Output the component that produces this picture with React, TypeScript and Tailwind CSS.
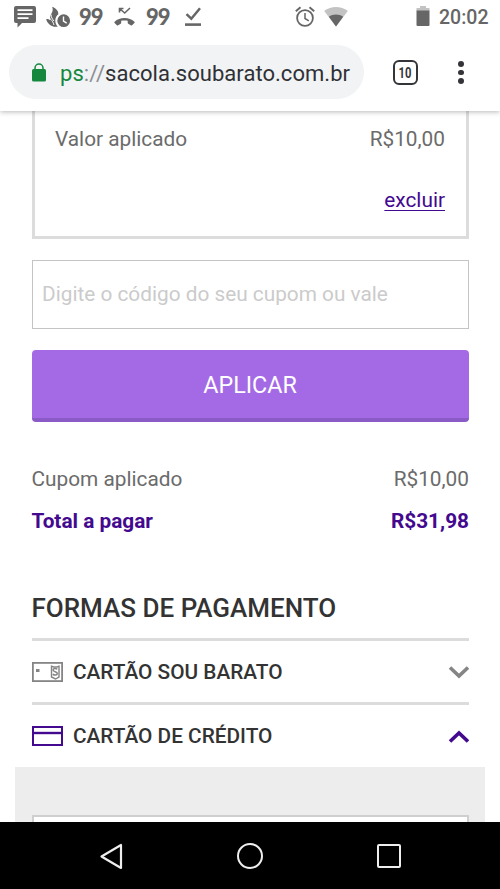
import React from "react";

function StatusBar() {
  return (
    <div className="relative z-20 flex h-[36px] shrink-0 items-start bg-white pl-[14px] text-[#666666]">
      <svg className="mt-[6px] h-[22px] w-[22px]" viewBox="0 0 22 22" fill="none">
        <path d="M2 0h18a2 2 0 0 1 2 2v13a2 2 0 0 1-2 2H8l-4.500 4.500V17H2a2 2 0 0 1-2-2V2a2 2 0 0 1 2-2Z" fill="currentColor" />
        <path d="M3.500 4.200h15M3.500 8.200h15M3.500 12.200h11" stroke="#fff" strokeWidth="1.700" />
      </svg>
      <svg className="mt-[6px] ml-[10px] h-[22px] w-[25px]" viewBox="0 0 25 22" fill="none">
        <path d="M6.200.8C9.500 2.300 12.800 4.700 12.300 8.200c-1.900 1.500-3 3.800-3 6.500 0 2.400 1 4.600 2.500 6H8c-3.500-.8-7.300-4-7.800-7.700 1.600-.1 3 .4 4.100 1.400C3.800 11.600 4.300 9.300 5.600 7.300 6.900 5.200 7 3 6.200.8Z" fill="currentColor" />
        <path d="M5 8.500c.3 3 1.200 4.500 3 6.500M1 11.500c3 .5 5.500 2.500 7 7.500" stroke="#fff" strokeWidth="1" />
        <circle cx="17.700" cy="14.700" r="7" fill="currentColor" stroke="#fff" strokeWidth="1.200" />
        <path d="M17.500 10.500v4.700l3.200 2" stroke="#fff" strokeWidth="1.400" />
      </svg>
      <span className="ml-[8px] w-[26px] font-['Lato',sans-serif] text-[22px] leading-[34px] font-black tracking-[-0.9px]">99</span>
      <svg className="mt-[7px] ml-[9px] h-[20px] w-[22px]" viewBox="0 0 22 20" fill="none">
        <path d="M5.500 1.500l5.200 4.500L16 1M5.500 5.500V1.500h4" stroke="currentColor" strokeWidth="1.600" />
        <path d="M10.500 11c4 0 7.200 1.200 9.900 3.700.4.400.4.800 0 1.200l-2.400 2.400c-.4.400-.9.300-1.300 0l-2.500-1.600c-.4-.2-.5-.5-.5-.9v-2c-2.200-.5-4.400-.5-6.500 0v2c0 .4-.1.700-.5.900l-2.500 1.600c-.4.300-.9.400-1.300 0L.6 15.900c-.4-.4-.4-.8 0-1.200C3.300 12.200 6.500 11 10.500 11Z" fill="currentColor" />
      </svg>
      <span className="ml-[10px] w-[26px] font-['Lato',sans-serif] text-[22px] leading-[34px] font-black tracking-[-0.9px]">99</span>
      <svg className="mt-[7px] ml-[13px] h-[20px] w-[18px]" viewBox="0 0 18 20" fill="none">
        <path d="M1.500 7.200l4.800 4.500L15 1.200" stroke="currentColor" strokeWidth="2.500" />
        <path d="M0 17.600h16" stroke="currentColor" strokeWidth="2.600" />
      </svg>
      <svg className="mt-[6px] ml-[92px] h-[21px] w-[20px]" viewBox="0 0 20 21" fill="none" stroke="currentColor">
        <circle cx="10" cy="12" r="7.900" strokeWidth="1.800" />
        <path d="M10 7v5.500l3.800 2.300" strokeWidth="1.500" />
        <path d="M.8 5.200L5.500 1.200M19.200 5.200L14.500 1.200" strokeWidth="1.900" />
      </svg>
      <svg className="mt-[7px] ml-[9px] h-[20px] w-[24px]" viewBox="0 0 24 20">
        <path d="M.2 4C7-1.300 17-1.300 23.800 4L12 19.500Z" fill="#c3c3c3" />
        <path d="M4.800 9.800c4-3.200 10.400-3.200 14.400 0L12 19.500Z" fill="currentColor" />
      </svg>
      <svg className="mt-[6px] ml-[68px] h-[21px] w-[14px]" viewBox="0 0 14 21">
        <path d="M4 0h6v2h3.500v3H.5V2H4Z" fill="#c3c3c3" />
        <path d="M.5 4.500h13V19a1 1 0 0 1-1 1h-11a1 1 0 0 1-1-1Z" fill="currentColor" />
      </svg>
      <span className="ml-[9px] text-[19.5px] leading-[36px] font-medium">20:02</span>
    </div>
  );
}

function AddressBar() {
  return (
    <div className="relative z-10 flex h-[75px] shrink-0 items-start bg-white pl-[9px] shadow-[0_1px_5px_rgba(0,0,0,0.28)]">
      <div className="mt-[9px] flex h-[54px] w-[355px] items-center rounded-full bg-[#f1f3f4] pl-[23px]">
        <svg className="h-[19px] w-[14px]" viewBox="0 0 14 19">
          <path d="M3 7V5a4 4 0 0 1 8 0v2" fill="none" stroke="#15883e" strokeWidth="1.500" />
          <rect y="6" width="14" height="12.500" rx="1.500" fill="#15883e" />
        </svg>
        <span className="ml-[14px] pt-[3px] text-[22px] leading-[54px] tracking-[0.04px] whitespace-nowrap text-[#303134]">
          <span className="text-[#15883e]">ps</span>
          <span className="text-[#8b8e91]">://</span>sacola.soubarato.com.br
        </span>
      </div>
      <div className="mt-[24px] ml-[29px] flex h-[25px] w-[25px] items-center justify-center rounded-[6px] border-[2.5px] border-[#343538] text-[#343538]">
        <span className="scale-x-[0.8] text-[14px] leading-none font-bold">10</span>
      </div>
      <div className="mt-[25px] ml-[40px] flex flex-col gap-[3px]">
        <i className="h-[5.500px] w-[6px] rounded-full bg-[#343538]" />
        <i className="h-[5.500px] w-[6px] rounded-full bg-[#343538]" />
        <i className="h-[5.500px] w-[6px] rounded-full bg-[#343538]" />
      </div>
    </div>
  );
}

function Chevron({ up = false }: { up?: boolean }) {
  return (
    <svg className={up ? "mt-px ml-auto h-[13px] w-[21px] text-[#43098f]" : "mt-[2px] ml-auto h-[13px] w-[21px] text-[#858585]"} viewBox="0 0 21 13" fill="none" stroke="currentColor" strokeWidth="3.600">
      <path d={up ? "M2 11.500L11 3L20 11.500" : "M2 1.500L11 10L20 1.500"} />
    </svg>
  );
}

function StoreCardIcon() {
  return (
    <svg className="h-[20px] w-[31px]" viewBox="0 0 31 20" fill="none" stroke="#858585">
      <rect x=".9" y=".9" width="29.200" height="18.200" strokeWidth="1.800" />
      <rect x="4" y="7" width="3.500" height="3" fill="#858585" stroke="none" />
      <path d="M19.500 4.200l2 .8h3.500l2-.8v10.800L23.500 17l-4-2Z" strokeWidth="1.400" />
      <path d="M25.300 7.300c-1.500-1.300-4.300-1-4.300.8 0 2 4.300 1.300 4.300 3.400 0 2-3 2-4.600.6" strokeWidth="1.500" />
    </svg>
  );
}

function CreditCardIcon() {
  return (
    <svg className="h-[20px] w-[31px]" viewBox="0 0 31 20" fill="none" stroke="#43098f" strokeWidth="2">
      <rect x="1" y="1" width="29" height="18" />
      <path d="M1 7h29" strokeWidth="2.400" />
    </svg>
  );
}

export default function App() {
  return (
    <div className="flex h-[889px] w-[500px] flex-col overflow-hidden bg-white font-['Roboto',sans-serif] text-[#6b6b6b]">
      <StatusBar />
      <AddressBar />
      <main className="flex h-[711px] shrink-0 flex-col overflow-hidden pr-[31px] pl-[32px] text-[20.8px]">
        <section className="flex h-[128px] shrink-0 flex-col border-x-[3px] border-b-[3px] border-[#dcdcdc] pr-[21px] pl-[20px]">
          <div className="flex h-[56px] items-center justify-between pt-[2px]">
            <span>Valor aplicado</span>
            <span>R$10,00</span>
          </div>
          <a className="mt-[21px] self-end leading-[24px] text-[#43098f] underline decoration-1 underline-offset-[3px]">excluir</a>
        </section>
        <div className="mt-[21px] flex h-[69px] shrink-0 items-center border border-[#c4c4c4] pt-px pl-[9px] text-[#cbcbcb]">Digite o código do seu cupom ou vale</div>
        <button className="mt-[21px] h-[72px] shrink-0 rounded-[4px] border-b-[4px] border-[#8a5bc6] bg-[#a46ae5] pt-[2px] pr-px text-[23.3px] text-white">APLICAR</button>
        <div className="mt-[36px] -ml-[0.5px] flex h-[42px] shrink-0 items-center justify-between pt-[2px]">
          <span>Cupom aplicado</span>
          <span>R$10,00</span>
        </div>
        <div className="-ml-[0.5px] flex h-[42px] shrink-0 items-center justify-between pt-[2px] font-bold text-[#43098f]">
          <span>Total a pagar</span>
          <span>R$31,98</span>
        </div>
        <h2 className="mt-[46px] -ml-[0.5px] h-[50px] shrink-0 text-[26px] leading-[41px] font-medium text-[#333333]">FORMAS DE PAGAMENTO</h2>
        <div className="flex h-[64px] shrink-0 items-center border-t-[3px] border-[#dcdcdc] text-[#333333]">
          <StoreCardIcon />
          <span className="ml-[10px] pt-[3px] font-medium">CARTÃO SOU BARATO</span>
          <Chevron />
        </div>
        <div className="flex h-[65px] shrink-0 items-center border-t-[3px] border-[#dcdcdc] text-[#333333]">
          <CreditCardIcon />
          <span className="ml-[10px] pt-[2px] font-medium">CARTÃO DE CRÉDITO</span>
          <Chevron up />
        </div>
        <div className="-mr-[16px] -ml-[17px] h-[56px] shrink-0 overflow-hidden bg-[#ededed] pt-[48px] pr-[16px] pl-[17px]">
          <div className="h-[40px] border-2 border-[#cfcfcf] bg-white" />
        </div>
      </main>
      <nav className="flex h-[67px] shrink-0 items-center bg-black pl-[99px]">
        <svg className="h-[28px] w-[25px]" viewBox="0 0 25 28" fill="none" stroke="#eee" strokeWidth="2.200" strokeLinejoin="round">
          <path d="M22 3v23L2.500 14.500Z" />
        </svg>
        <i className="ml-[113px] h-[26px] w-[26px] rounded-full border-[2.5px] border-[#eee]" />
        <i className="ml-[114px] h-[24px] w-[24px] rounded-[2px] border-[2.5px] border-[#eee]" />
      </nav>
    </div>
  );
}
